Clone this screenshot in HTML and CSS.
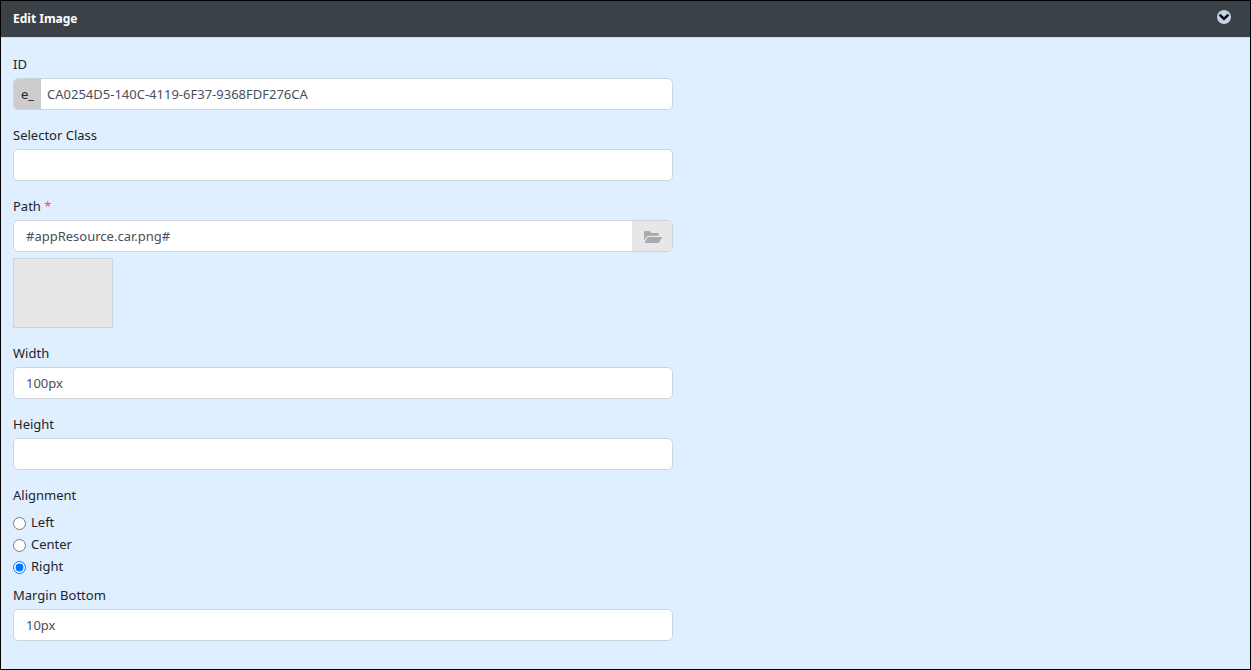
FILE: index.html
```
<!DOCTYPE html>
<html lang="en">
<head>
    <meta charset="utf-8">
    <meta name="viewport" content="width=device-width, initial-scale=1.0">
    <title>Edit Image</title>
    <link rel="stylesheet" href="styles.css">
</head>
<body>
    <div class="panel">
        <div class="panel-header">
            <h1 class="panel-title">Edit Image</h1>
            <button type="button" class="collapse-btn" aria-label="Collapse">
                <svg width="14" height="14" viewBox="0 0 14 14">
                    <circle cx="7" cy="7" r="7" fill="#c4d3e8"/>
                    <path d="M2.6 4.6L7 8.8L11.4 4.6" fill="none" stroke="#000" stroke-width="2.4"/>
                </svg>
            </button>
        </div>
        <form class="panel-body">
            <div class="form-group">
                <label for="elementId">ID</label>
                <div class="input-group">
                    <span class="prefix">e_</span>
                    <input type="text" id="elementId" class="id-input" value="CA0254D5-140C-4119-6F37-9368FDF276CA">
                </div>
            </div>
            <div class="form-group">
                <label for="selectorClass">Selector Class</label>
                <div class="input-group">
                    <input type="text" id="selectorClass">
                </div>
            </div>
            <div class="form-group">
                <label for="path">Path <span class="required">*</span></label>
                <div class="input-group">
                    <input type="text" id="path" value="#appResource.car.png#">
                    <button type="button" class="browse-btn" aria-label="Browse">
                        <svg width="18" height="12" viewBox="0 0 18 12" fill="#a5abb0">
                            <path d="M0 9.6V1.4Q0 0 1.4 0H5.4L7.4 2H13.6Q15 2 15 3.4V4.8H5Q3.4 4.8 2.6 6Z"/>
                            <path d="M4.8 6H17.4Q18.3 6 17.8 6.9L15.3 11.2Q14.8 12 13.8 12H1.2Q.3 12 .8 11.1L3.2 6.9Q3.8 6 4.8 6Z"/>
                        </svg>
                    </button>
                </div>
                <div class="thumbnail"></div>
            </div>
            <div class="form-group">
                <label for="width">Width</label>
                <div class="input-group">
                    <input type="text" id="width" value="100px">
                </div>
            </div>
            <div class="form-group">
                <label for="height">Height</label>
                <div class="input-group">
                    <input type="text" id="height">
                </div>
            </div>
            <fieldset class="radio-group">
                <legend>Alignment</legend>
                <label class="radio"><input type="radio" name="alignment" value="left"><span>Left</span></label>
                <label class="radio"><input type="radio" name="alignment" value="center"><span>Center</span></label>
                <label class="radio"><input type="radio" name="alignment" value="right" checked><span>Right</span></label>
            </fieldset>
            <div class="form-group">
                <label for="marginBottom">Margin Bottom</label>
                <div class="input-group">
                    <input type="text" id="marginBottom" value="10px">
                </div>
            </div>
        </form>
    </div>
</body>
</html>
```
FILE: styles.css
```
* {
    box-sizing: border-box;
}
body {
    margin: 0;
    background-color: #e0efff;
    color: #212529;
    font-family: "Segoe UI", "Noto Sans", sans-serif;
    font-size: 13px;
    line-height: 20px;
}
.panel {
    min-height: 100vh;
    border: 1px solid #000;
}
.panel-header {
    display: flex;
    align-items: center;
    justify-content: space-between;
    height: 37px;
    padding: 0 19px 1px 12px;
    background-color: #3a4248;
    border-bottom: 1px solid #d0d8e0;
}
.panel-title {
    margin: 0;
    color: #fff;
    font-size: 12px;
    font-weight: 700;
}
.collapse-btn {
    display: flex;
    padding: 0 0 3px;
    background: none;
    border: none;
    cursor: pointer;
}
.panel-body {
    width: 54%;
    min-width: 300px;
    padding: 16px 2px 12px 12px;
}
.form-group {
    margin-bottom: 15px;
}
.form-group label {
    display: block;
    margin-bottom: 4px;
}
.required {
    color: #f0505a;
}
.input-group {
    display: flex;
    height: 32px;
    background-color: #fff;
    border: 1px solid #ced4da;
    border-radius: 5px;
    overflow: hidden;
}
.input-group input {
    flex: 1;
    min-width: 0;
    padding: 0 12px;
    background: none;
    border: none;
    color: #495057;
    font: inherit;
}
.input-group .id-input {
    padding: 0 6px;
}
.input-group:focus-within {
    border-color: #80bdff;
}
.input-group input:focus {
    outline: none;
}
.prefix {
    width: 27px;
    background-color: #ccc;
    line-height: 30px;
    text-align: center;
}
.browse-btn {
    display: flex;
    align-items: center;
    justify-content: center;
    width: 40px;
    padding: 2px 0 0 2px;
    background-color: #e7e7e7;
    border: none;
    cursor: pointer;
}
.thumbnail {
    width: 100px;
    height: 70px;
    margin-top: 6px;
    background-color: #e7e7e7;
    border: 1px solid #ced4da;
}
.radio-group {
    margin: 0 0 8px;
    padding: 0;
    border: none;
}
.radio-group legend {
    margin-bottom: 6px;
    padding: 0;
}
.radio {
    display: flex;
    align-items: center;
    gap: 5px;
    height: 22px;
}
.radio input {
    width: 13px;
    height: 13px;
    margin: 3px 0 0;
}
```
